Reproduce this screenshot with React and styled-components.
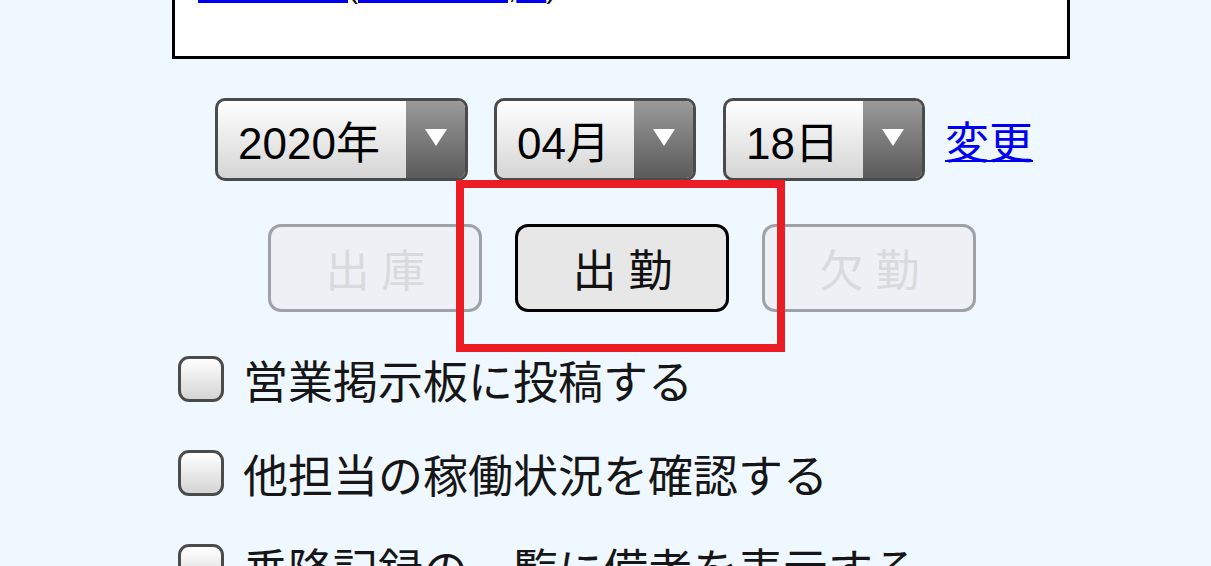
import React from "react";
import styled, { createGlobalStyle } from "styled-components";

const GlobalStyle = createGlobalStyle`
  html, body {
    margin: 0;
    padding: 0;
    background: #eff7ff;
    overflow: hidden;
  }
  body {
    font-family: "Liberation Sans", "Noto Sans CJK JP", sans-serif;
    color: #111;
  }
`;

const Page = styled.div`
  width: 898px;
  margin-left: 172px;
  display: flex;
  flex-direction: column;
`;

const NoticeBox = styled.div`
  margin-top: -44px;
  height: 103px;
  box-sizing: border-box;
  background: #fff;
  border: 3px solid #000;
  border-top: none;
  padding: 12px 0 0 23px;
  font-size: 30px;
  line-height: 40px;
  white-space: nowrap;
`;

const Link = styled.a`
  color: #0000ee;
  text-decoration: underline;
  text-decoration-thickness: 3px;
  text-underline-offset: 2px;
  font-size: ${(p) => p.$size || "inherit"};
  cursor: pointer;
`;

const ChangeLink = styled(Link)`
  font-size: 44px;
  text-decoration-thickness: 2px;
  text-underline-offset: auto;
`;

const DateRow = styled.div`
  margin-top: 39px;
  display: flex;
  align-items: center;
  padding-left: 43px;
`;

const SelectBox = styled.div`
  width: ${(p) => p.$width}px;
  height: 83px;
  box-sizing: border-box;
  border: 3px solid #4b4b4b;
  border-radius: 10px;
  overflow: hidden;
  display: flex;
  margin-right: ${(p) => p.$gap}px;
  background: linear-gradient(#ffffff, #d5d5d5);
`;

const SelectLabel = styled.div`
  flex: 1;
  display: flex;
  align-items: center;
  padding-left: 20px;
  font-size: 44px;
  color: #000;
`;

const Arrow = styled.div`
  width: 59px;
  display: flex;
  align-items: center;
  justify-content: center;
  background: linear-gradient(#9a9a9a, #5b5b5b);
`;

const Triangle = styled.span`
  width: 0;
  height: 0;
  border-left: 11px solid transparent;
  border-right: 11px solid transparent;
  border-top: 17px solid #fff;
  margin-top: -4px;
`;

const ButtonRow = styled.div`
  margin-top: 43px;
  display: flex;
  justify-content: center;
  gap: 33px;
  padding-left: 1px;
`;

const ButtonWrap = styled.div`
  position: relative;
`;

const ActionButton = styled.button`
  width: 214px;
  height: 88px;
  box-sizing: border-box;
  border-radius: 13px;
  border: 3px solid ${(p) => (p.disabled ? "#9ea2a8" : "#000")};
  background: ${(p) => (p.disabled ? "#edf0f5" : "#e7e7e7")};
  color: ${(p) => (p.disabled ? "#d8dadd" : "#111")};
  font-family: "Liberation Sans", "Noto Sans CJK JP", sans-serif;
  font-size: 44px;
  padding: 0 0 0 2px;
  display: flex;
  align-items: center;
  justify-content: center;
`;

const Highlight = styled.div`
  position: absolute;
  left: -59px;
  top: -44px;
  width: 329px;
  height: 172px;
  box-sizing: border-box;
  border: 8px solid #ec1c24;
  pointer-events: none;
`;

const OptionList = styled.div`
  margin-top: 20px;
  padding-left: 6px;
  display: flex;
  flex-direction: column;
`;

const OptionRow = styled.label`
  height: 94px;
  display: flex;
  align-items: center;
  gap: 19px;
  font-size: 45px;
  color: #161616;
  white-space: nowrap;
`;

const CheckBox = styled.span`
  width: 46px;
  height: 46px;
  flex: none;
  box-sizing: border-box;
  border: 3px solid #4b4b4b;
  border-radius: 11px;
  background: linear-gradient(#ffffff, #d4d4d4);
`;

const selects = [
  { label: "2020年", width: 253, gap: 26 },
  { label: "04月", width: 202, gap: 27 },
  { label: "18日", width: 202, gap: 20 },
];

const options = [
  "営業掲示板に投稿する",
  "他担当の稼働状況を確認する",
  "乗降記録の一覧に備考を表示する",
];

export default function App() {
  return (
    <>
      <GlobalStyle />
      <Page>
        <NoticeBox>
          <Link>日報を確認</Link>(<Link>前日分一覧</Link>,<Link>他</Link>)
        </NoticeBox>

        <DateRow>
          {selects.map((s) => (
            <SelectBox key={s.label} $width={s.width} $gap={s.gap}>
              <SelectLabel>{s.label}</SelectLabel>
              <Arrow>
                <Triangle />
              </Arrow>
            </SelectBox>
          ))}
          <ChangeLink>変更</ChangeLink>
        </DateRow>

        <ButtonRow>
          <ActionButton disabled>出 庫</ActionButton>
          <ButtonWrap>
            <ActionButton>出 勤</ActionButton>
            <Highlight />
          </ButtonWrap>
          <ActionButton disabled>欠 勤</ActionButton>
        </ButtonRow>

        <OptionList>
          {options.map((o) => (
            <OptionRow key={o}>
              <CheckBox />
              {o}
            </OptionRow>
          ))}
        </OptionList>
      </Page>
    </>
  );
}
